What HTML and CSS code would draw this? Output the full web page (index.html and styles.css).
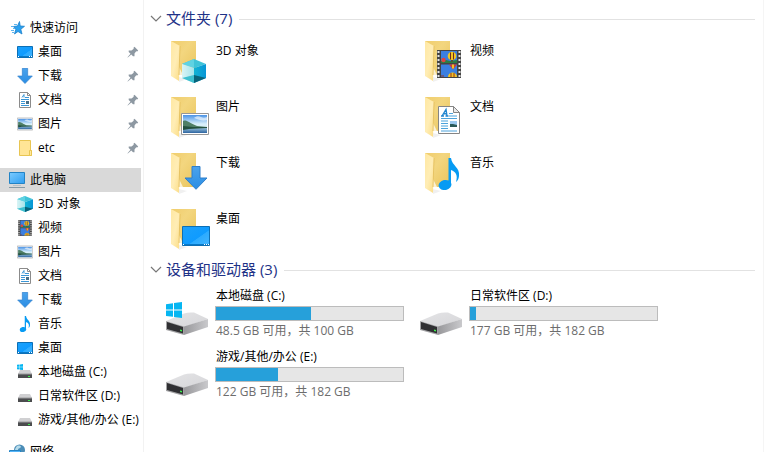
FILE: index.html
```html
<!DOCTYPE html>
<html lang="zh-CN">

<head>
  <meta charset="UTF-8" />
  <meta name="viewport" content="width=device-width, initial-scale=1" />
  <title>此电脑</title>
  <link rel="stylesheet" href="styles.css">
</head>

<body>

  <!-- 图标定义 -->
  <svg class="sprite" aria-hidden="true">
    <defs>
      <linearGradient id="gFolder" x1="0" y1="0" x2="1" y2="1">
        <stop offset="0" stop-color="#f0cd6c" />
        <stop offset=".4" stop-color="#f3d67f" />
        <stop offset="1" stop-color="#e9c45c" />
      </linearGradient>
      <linearGradient id="gFlap" x1="0" y1="0" x2="1" y2="1">
        <stop offset="0" stop-color="#ffe8a3" />
        <stop offset=".5" stop-color="#ffedb5" />
        <stop offset="1" stop-color="#fbdc85" />
      </linearGradient>
      <linearGradient id="gDesk" x1="0" y1="0" x2="1" y2="1">
        <stop offset="0" stop-color="#1ba1fb" />
        <stop offset=".58" stop-color="#0f9bff" />
        <stop offset=".6" stop-color="#2cabff" />
        <stop offset="1" stop-color="#43b5ff" />
      </linearGradient>
      <linearGradient id="gArrow" x1="0" y1="0" x2="0" y2="1">
        <stop offset="0" stop-color="#4ba3ec" />
        <stop offset="1" stop-color="#2a8de4" />
      </linearGradient>
      <linearGradient id="gSky" x1="0" y1="0" x2="0" y2="1">
        <stop offset="0" stop-color="#4b93e6" />
        <stop offset=".5" stop-color="#d9f0fb" />
        <stop offset="1" stop-color="#cfe6ee" />
      </linearGradient>
      <linearGradient id="gSea" x1="0" y1="0" x2="0" y2="1">
        <stop offset="0" stop-color="#a9cfe4" />
        <stop offset="1" stop-color="#2d64a0" />
      </linearGradient>
      <linearGradient id="gCubeL" x1="0" y1="0" x2="1" y2="0">
        <stop offset="0" stop-color="#d9f4f5" />
        <stop offset="1" stop-color="#a5e3ea" />
      </linearGradient>
      <linearGradient id="gCubeR" x1="0" y1="0" x2="1" y2="0">
        <stop offset="0" stop-color="#12b3d3" />
        <stop offset="1" stop-color="#0795d6" />
      </linearGradient>
      <linearGradient id="gDriveTop" x1="0" y1="0" x2="1" y2="1">
        <stop offset="0" stop-color="#e4e4e6" />
        <stop offset="1" stop-color="#d6d6d9" />
      </linearGradient>
      <linearGradient id="gDriveSide" x1="0" y1="0" x2="1" y2="0">
        <stop offset="0" stop-color="#98989b" />
        <stop offset="1" stop-color="#c9c9cc" />
      </linearGradient>
      <linearGradient id="gScreen" x1="0" y1="0" x2="1" y2="1">
        <stop offset="0" stop-color="#7ccbff" />
        <stop offset="1" stop-color="#2d9df0" />
      </linearGradient>
    </defs>

    <symbol id="folder" viewBox="0 0 48 48">
      <path d="M13 40l8 2-8 3z" fill="#f0f0f0" />
      <path d="M5 4h25v34H5z" fill="url(#gFolder)" />
      <path d="M13 30l4 8h-4z" fill="#fff" opacity=".7" />
      <path d="M5 4l9 5-1 35-8-5z" fill="url(#gFlap)" />
      <path d="M14 9l-1 29" stroke="#dfb850" stroke-width=".7" />
    </symbol>
    <symbol id="cube" viewBox="0 0 24 24">
      <path d="M0 5l12-5 12 5-12 4z" fill="#3fc3d8" />
      <path d="M12 0v9L0 5z" fill="#5fd2e2" />
      <path d="M0 5l12 4v15L0 19z" fill="url(#gCubeL)" />
      <path d="M24 5L12 9v15l12-5z" fill="url(#gCubeR)" />
      <path d="M0 19l12-3v8z" fill="#3fc0d0" />
      <path d="M24 19l-12-3v8z" fill="#08637a" />
    </symbol>
    <symbol id="picture" viewBox="0 0 28 22">
      <path d="M.5.5h27v21H.5z" fill="#fff" stroke="#969696" />
      <path d="M2 2h24v18H2z" fill="url(#gSky)" />
      <path d="M2 14h24v6H2z" fill="url(#gSea)" />
      <path d="M13 5c2-2 5-2 7-1s4 1 6 0v3c-4 1-8 0-13-2z" fill="#fff" opacity=".6" />
      <path d="M2 8c2-1 4 0 6 1s5 3 8 4l10 1v1H2z" fill="#4f7f66" />
      <path d="M2 13l10 1 14 0v1l-18 1-6 1z" fill="#23503f" />
    </symbol>
    <symbol id="desktop" viewBox="0 0 28 20">
      <path d="M.5.5h27v19H.5z" fill="url(#gDesk)" stroke="#0c6fb5" />
      <path d="M1 18h26v1H1z" fill="#0879c8" />
      <path d="M1 18h1v1H1zM22 18h1v1h-1zM24 18h1v1h-1zM26 18h1v1h-1z" fill="#fff" />
    </symbol>
    <symbol id="desktop-small" viewBox="0 0 16 16">
      <path d="M.5 2.500h15v11H.5z" fill="url(#gDesk)" stroke="#0c6fb5" />
      <path d="M1 12h14v1H1z" fill="#0879c8" />
      <path d="M1 12h1v1H1zM12 12h1v1h-1zM14 12h1v1h-1z" fill="#fff" />
    </symbol>
    <symbol id="download" viewBox="0 0 24 24">
      <path d="M8 .5h8V12h7L12 23.300 1 12h7z" fill="url(#gArrow)" stroke="#2f7fcb" />
    </symbol>
    <symbol id="document" viewBox="0 0 22 28">
      <path d="M.5.5h15l6 6v21H.5z" fill="#fff" stroke="#858585" />
      <path d="M15.500.5v6h6z" fill="#e8e8e8" stroke="#858585" />
      <path d="M4 10L8 3.500 9 10M5 7.800h4M3 10h3M7.500 10h3" fill="none" stroke="#2186d0" stroke-width="1.400" />
      <path d="M11 7.500h4M11 10h8M3 12.500h16M3 15h7M3 17.500h7M3 20h7M3 22.500h7M3 25h16" stroke="#4ca3dc" />
      <path d="M12 15h7v6h-7z" fill="#9cc9ee" />
      <path d="M12 18l3 0 4 1v2h-7z" fill="#2b5a58" />
    </symbol>
    <symbol id="film" viewBox="0 0 24 28">
      <path d="M0 0h24v28H0z" fill="#444" />
      <path d="M1.500 1v26M22.500 1v26" stroke="#e4e4e4" stroke-width="2" stroke-dasharray="2 2" />
      <path d="M4 1h16v12H4zM4 14.500h16V27H4z" fill="#3b7fe0" />
      <path d="M4 11l5-1 4 1 7-1v3H4z" fill="#2c7d43" />
      <circle cx="15" cy="6" r="4.300" fill="#f2c522" />
      <path d="M13.500 2.500v7M16.500 2.500v7" stroke="#6d2c20" />
      <path d="M14 10h2v2h-2z" fill="#553" />
      <circle cx="6.500" cy="10" r="2.200" fill="#e1433b" />
      <path d="M12 14.500h8l-4 5z" fill="#d33c30" />
      <path d="M15 14.500h2v4h-2z" fill="#f2c522" />
      <path d="M11 27c0-6 9-6 9 0z" fill="#f2c522" />
      <path d="M14 23v4M17 23v4M4 26h3" stroke="#933226" />
    </symbol>
    <symbol id="note" viewBox="0 0 22 32">
      <ellipse cx="7" cy="27" rx="6.500" ry="5" transform="rotate(-12 7 27)" fill="#079bf3" />
      <path d="M10.500 0H13c1 8 9 9 8 18-.2 3-1.500 5-3 6 2-7 0-10-5-12v15h-2.500z" fill="#079bf3" />
    </symbol>
    <symbol id="drive" viewBox="0 0 42 23">
      <path d="M0 9L18 1.500Q22 0 28 .5L42 7 18 15z" fill="url(#gDriveTop)" />
      <path d="M18 14.500L42 7v8L18 23z" fill="url(#gDriveSide)" />
      <path d="M0 9l18 5.500V23L0 18z" fill="#a3a3a5" />
      <path d="M1 10l16 5v6.500L1 17z" fill="#303033" />
      <path d="M14 17.500l2 .5v1.500l-2-.5z" fill="#3cf04c" />
    </symbol>
    <symbol id="winlogo" viewBox="0 0 16 16">
      <path d="M0 2.200L7 1.200v6.300H0zM8 1l8-1v7.500H8zM0 8.500h7v6.300L0 14zM8 8.500h8V16l-8-1z" fill="#06b6f2" />
    </symbol>
    <symbol id="drive-small" viewBox="0 0 16 16">
      <path d="M3 6h10l2 4H1z" fill="#d0d0d2" />
      <path d="M1 10h14v4H1z" fill="#4b4c4e" />
      <path d="M1 10h14" stroke="#9a9a9c" />
      <path d="M11 12h2v1h-2z" fill="#3ff34f" />
    </symbol>
    <symbol id="folder-small" viewBox="0 0 16 16">
      <path d="M2.500.5h11v10h1v5h-12z" fill="#ffe596" stroke="#e8c552" />
      <path d="M12.500 15v-4.500h2v5h-2z" fill="#ffe99f" stroke="#e8c552" />
    </symbol>
    <symbol id="document-small" viewBox="0 0 16 16">
      <path d="M2.500.5h8l3 3v12h-11z" fill="#fff" stroke="#8b8b8b" />
      <path d="M10.500.5v3h3" fill="none" stroke="#8b8b8b" />
      <path d="M5 5.500l2-3v3M8 5.500h4M4 7.500h8M4 9.500h4M4 11.500h4M4 13.500h8" fill="none" stroke="#3a96d6" />
      <path d="M9 9h3v3H9z" fill="#476f88" />
    </symbol>
    <symbol id="star" viewBox="0 0 16 16">
      <path d="M10.500 1.500l.7 4.500 4.300.3-3.700 3 1.200 4.700-4-2.500L5.500 14l1.300-4.500L4.500 6.500l4-.5z" fill="#2aa0ee" stroke="#1a80cb" stroke-width=".8" />
      <path d="M5 4.500h3M2 6.500h2M4 8.500h2M2 10.500h3M3 12.500h2" stroke="#5eb5ee" />
    </symbol>
    <symbol id="computer" viewBox="0 0 16 16">
      <path d="M.5.5h15v11H.5z" fill="url(#gScreen)" stroke="#2383c5" />
      <path d="M4 13.500h8" stroke="#b6c2c9" />
      <path d="M0 15.500h16" stroke="#879aa5" />
    </symbol>
    <symbol id="network" viewBox="0 0 16 16">
      <circle cx="10.500" cy="6" r="5.500" fill="#4b8db7" />
      <path d="M8 2c2-1 4 0 4 1s-3 1-3 3-3 1-3 0 1-3 2-4z" fill="#b7dceb" />
      <path d="M.5 6.500h11v7H.5z" fill="#55b5f8" stroke="#2383c5" />
    </symbol>
    <symbol id="pin" viewBox="0 0 12 12">
      <path d="M7.500.8l3.700 3.700-1 1-1-.2L7.500 7.500v2.800L6 10.300 4.300 8.500.8 11.500.5 11.200 3.500 7.700 1.700 6 1.700 4.500h2.800L6.700 2.800 6.500 1.800z" fill="#8d98a2" />
    </symbol>
    <symbol id="chevron" viewBox="0 0 12 12">
      <path d="M1 3l5 5 5-5" fill="none" stroke="#777" stroke-width="1.200" />
    </symbol>
  </svg>

  <div class="explorer">

    <!-- 导航窗格 -->
    <nav class="sidebar">
      <ul class="tree">
        <li><a class="node root" href="#"><svg class="icon"><use href="#star" /></svg><span class="label">快速访问</span></a></li>
        <li><a class="node" href="#"><svg class="icon"><use href="#desktop-small" /></svg><span class="label">桌面</span><svg class="pin"><use href="#pin" /></svg></a></li>
        <li><a class="node" href="#"><svg class="icon"><use href="#download" /></svg><span class="label">下载</span><svg class="pin"><use href="#pin" /></svg></a></li>
        <li><a class="node" href="#"><svg class="icon"><use href="#document-small" /></svg><span class="label">文档</span><svg class="pin"><use href="#pin" /></svg></a></li>
        <li><a class="node" href="#"><svg class="icon"><use href="#picture" /></svg><span class="label">图片</span><svg class="pin"><use href="#pin" /></svg></a></li>
        <li><a class="node" href="#"><svg class="icon"><use href="#folder-small" /></svg><span class="label">etc</span><svg class="pin"><use href="#pin" /></svg></a></li>
      </ul>
      <ul class="tree">
        <li><a class="node root selected" href="#"><svg class="icon"><use href="#computer" /></svg><span class="label">此电脑</span></a></li>
        <li><a class="node" href="#"><svg class="icon"><use href="#cube" /></svg><span class="label">3D 对象</span></a></li>
        <li><a class="node" href="#"><svg class="icon"><use href="#film" /></svg><span class="label">视频</span></a></li>
        <li><a class="node" href="#"><svg class="icon"><use href="#picture" /></svg><span class="label">图片</span></a></li>
        <li><a class="node" href="#"><svg class="icon"><use href="#document-small" /></svg><span class="label">文档</span></a></li>
        <li><a class="node" href="#"><svg class="icon"><use href="#download" /></svg><span class="label">下载</span></a></li>
        <li><a class="node" href="#"><svg class="icon"><use href="#note" /></svg><span class="label">音乐</span></a></li>
        <li><a class="node" href="#"><svg class="icon"><use href="#desktop-small" /></svg><span class="label">桌面</span></a></li>
        <li><a class="node" href="#"><svg class="icon"><use href="#drive-small" /><use href="#winlogo" width="6" height="6" /></svg><span class="label">本地磁盘 (C:)</span></a></li>
        <li><a class="node" href="#"><svg class="icon"><use href="#drive-small" /></svg><span class="label">日常软件区 (D:)</span></a></li>
        <li><a class="node" href="#"><svg class="icon"><use href="#drive-small" /></svg><span class="label">游戏/其他/办公 (E:)</span></a></li>
      </ul>
      <ul class="tree">
        <li><a class="node root" href="#"><svg class="icon"><use href="#network" /></svg><span class="label">网络</span></a></li>
      </ul>
    </nav>

    <main class="content">

      <!-- 文件夹 -->
      <section>
        <h2 class="group-title"><button class="group-toggle" type="button"><svg class="chevron"><use href="#chevron" /></svg><span class="label">文件夹 (7)</span></button></h2>
        <div class="items folders">
          <a class="item" href="#">
            <svg class="big-icon" viewBox="0 0 48 48"><use href="#folder" /><use href="#cube" x="16" y="22" width="24" height="24" /></svg>
            <span class="name">3D 对象</span>
          </a>
          <a class="item" href="#">
            <svg class="big-icon" viewBox="0 0 48 48"><use href="#folder" /><use href="#film" x="17" y="13" width="24" height="28" /></svg>
            <span class="name">视频</span>
          </a>
          <a class="item" href="#">
            <svg class="big-icon" viewBox="0 0 48 48"><use href="#folder" /><use href="#picture" x="15" y="20" width="28" height="22" /></svg>
            <span class="name">图片</span>
          </a>
          <a class="item" href="#">
            <svg class="big-icon" viewBox="0 0 48 48"><use href="#folder" /><use href="#document" x="18" y="13" width="22" height="28" /></svg>
            <span class="name">文档</span>
          </a>
          <a class="item" href="#">
            <svg class="big-icon" viewBox="0 0 48 48"><use href="#folder" /><use href="#download" x="18" y="17" width="24" height="24" /></svg>
            <span class="name">下载</span>
          </a>
          <a class="item" href="#">
            <svg class="big-icon" viewBox="0 0 48 48"><use href="#folder" /><use href="#note" x="18" y="9" width="22" height="32" /></svg>
            <span class="name">音乐</span>
          </a>
          <a class="item" href="#">
            <svg class="big-icon" viewBox="0 0 48 48"><use href="#folder" /><use href="#desktop" x="16" y="21" width="28" height="20" /></svg>
            <span class="name">桌面</span>
          </a>
        </div>
      </section>

      <!-- 设备和驱动器 -->
      <section>
        <h2 class="group-title"><button class="group-toggle" type="button"><svg class="chevron"><use href="#chevron" /></svg><span class="label">设备和驱动器 (3)</span></button></h2>
        <div class="items drives">
          <a class="item" href="#">
            <svg class="big-icon" viewBox="0 0 48 48"><use href="#drive" x="0" y="22" width="42" height="23" /><use href="#winlogo" x="0" y="12" width="16" height="16" /></svg>
            <span class="drive-info">
              <label class="drive-name" for="driveC">本地磁盘 (C:)</label>
              <progress class="usage" id="driveC" value="51" max="100"></progress>
              <span class="free">48.5 GB 可用，共 100 GB</span>
            </span>
          </a>
          <a class="item" href="#">
            <svg class="big-icon" viewBox="0 0 48 48"><use href="#drive" x="0" y="22" width="42" height="23" /></svg>
            <span class="drive-info">
              <label class="drive-name" for="driveD">日常软件区 (D:)</label>
              <progress class="usage" id="driveD" value="3" max="100"></progress>
              <span class="free">177 GB 可用，共 182 GB</span>
            </span>
          </a>
          <a class="item" href="#">
            <svg class="big-icon" viewBox="0 0 48 48"><use href="#drive" x="0" y="22" width="42" height="23" /></svg>
            <span class="drive-info">
              <label class="drive-name" for="driveE">游戏/其他/办公 (E:)</label>
              <progress class="usage" id="driveE" value="33" max="100"></progress>
              <span class="free">122 GB 可用，共 182 GB</span>
            </span>
          </a>
        </div>
      </section>

    </main>
  </div>

</body>

</html>
```
FILE: styles.css
```css
* {
  box-sizing: border-box;
}

body {
  margin: 0;
  background: #fff;
  color: #000;
  font-family: "Open Sans", "Noto Sans CJK SC", sans-serif;
  font-size: 12px;
}

a {
  color: inherit;
  text-decoration: none;
}

.sprite {
  position: absolute;
  width: 0;
  height: 0;
}

.explorer {
  display: flex;
  height: 100vh;
  overflow: hidden;
}

/* 导航窗格 */
.sidebar {
  flex: none;
  width: 144px;
  padding: 16px 2px 0 0;
  border-right: 1px solid #f2f2f2;
  overflow: hidden;
}

.tree {
  list-style: none;
  margin: 0 0 8px;
  padding: 0;
}

.node {
  display: flex;
  align-items: center;
  gap: 5px;
  height: 24px;
  padding-left: 17px;
  white-space: nowrap;
}

.node.root {
  padding-left: 9px;
}

.node.selected {
  background: #d9d9d9;
}

.label {
  padding-bottom: 2px;
}

.icon {
  flex: none;
  width: 16px;
  height: 16px;
}

.pin {
  width: 12px;
  height: 12px;
  margin-left: auto;
  margin-right: 2px;
}

/* 内容区 */
.content {
  flex: 1;
  margin-right: 18px;
  padding: 9px 8px 0 6px;
  border-right: 1px solid #f5f5f5;
}

.group-title {
  display: flex;
  align-items: center;
  gap: 7px;
  height: 20px;
  margin: 0 0 7px;
  font-weight: normal;
}

.group-title::after {
  content: "";
  flex: 1;
  height: 1px;
  background: #e2e2e2;
}

.group-toggle {
  display: flex;
  align-items: center;
  gap: 4px;
  padding: 0;
  border: 0;
  background: none;
  color: #1e3287;
  font-family: inherit;
  font-size: 15px;
  line-height: 20px;
}

.chevron {
  width: 12px;
  height: 12px;
}

.items {
  display: grid;
  grid-template-columns: repeat(auto-fill, 254px);
  padding-left: 16px;
}

.folders {
  grid-auto-rows: 56px;
}

.drives {
  grid-auto-rows: 61px;
}

.item {
  display: flex;
  align-items: flex-start;
  gap: 2px;
}

.big-icon {
  flex: none;
  width: 48px;
  height: 48px;
  margin-top: 1px;
}

.name {
  margin-top: 6px;
  line-height: 18px;
}

.drives .big-icon {
  margin-top: 3px;
  margin-right: -1px;
}

.drive-info {
  display: flex;
  flex-direction: column;
  width: 189px;
}

.drive-name,
.free {
  padding-left: 1px;
  line-height: 18px;
}

.free {
  padding-top: 1px;
  color: #6d6d6d;
}

.usage {
  appearance: none;
  width: 100%;
  height: 15px;
  margin-top: 1px;
  border: 1px solid #bcbcbc;
  background: #e6e6e6;
}

.usage::-webkit-progress-bar {
  background: #e6e6e6;
}

.usage::-webkit-progress-value {
  background: #26a0da;
}
```
